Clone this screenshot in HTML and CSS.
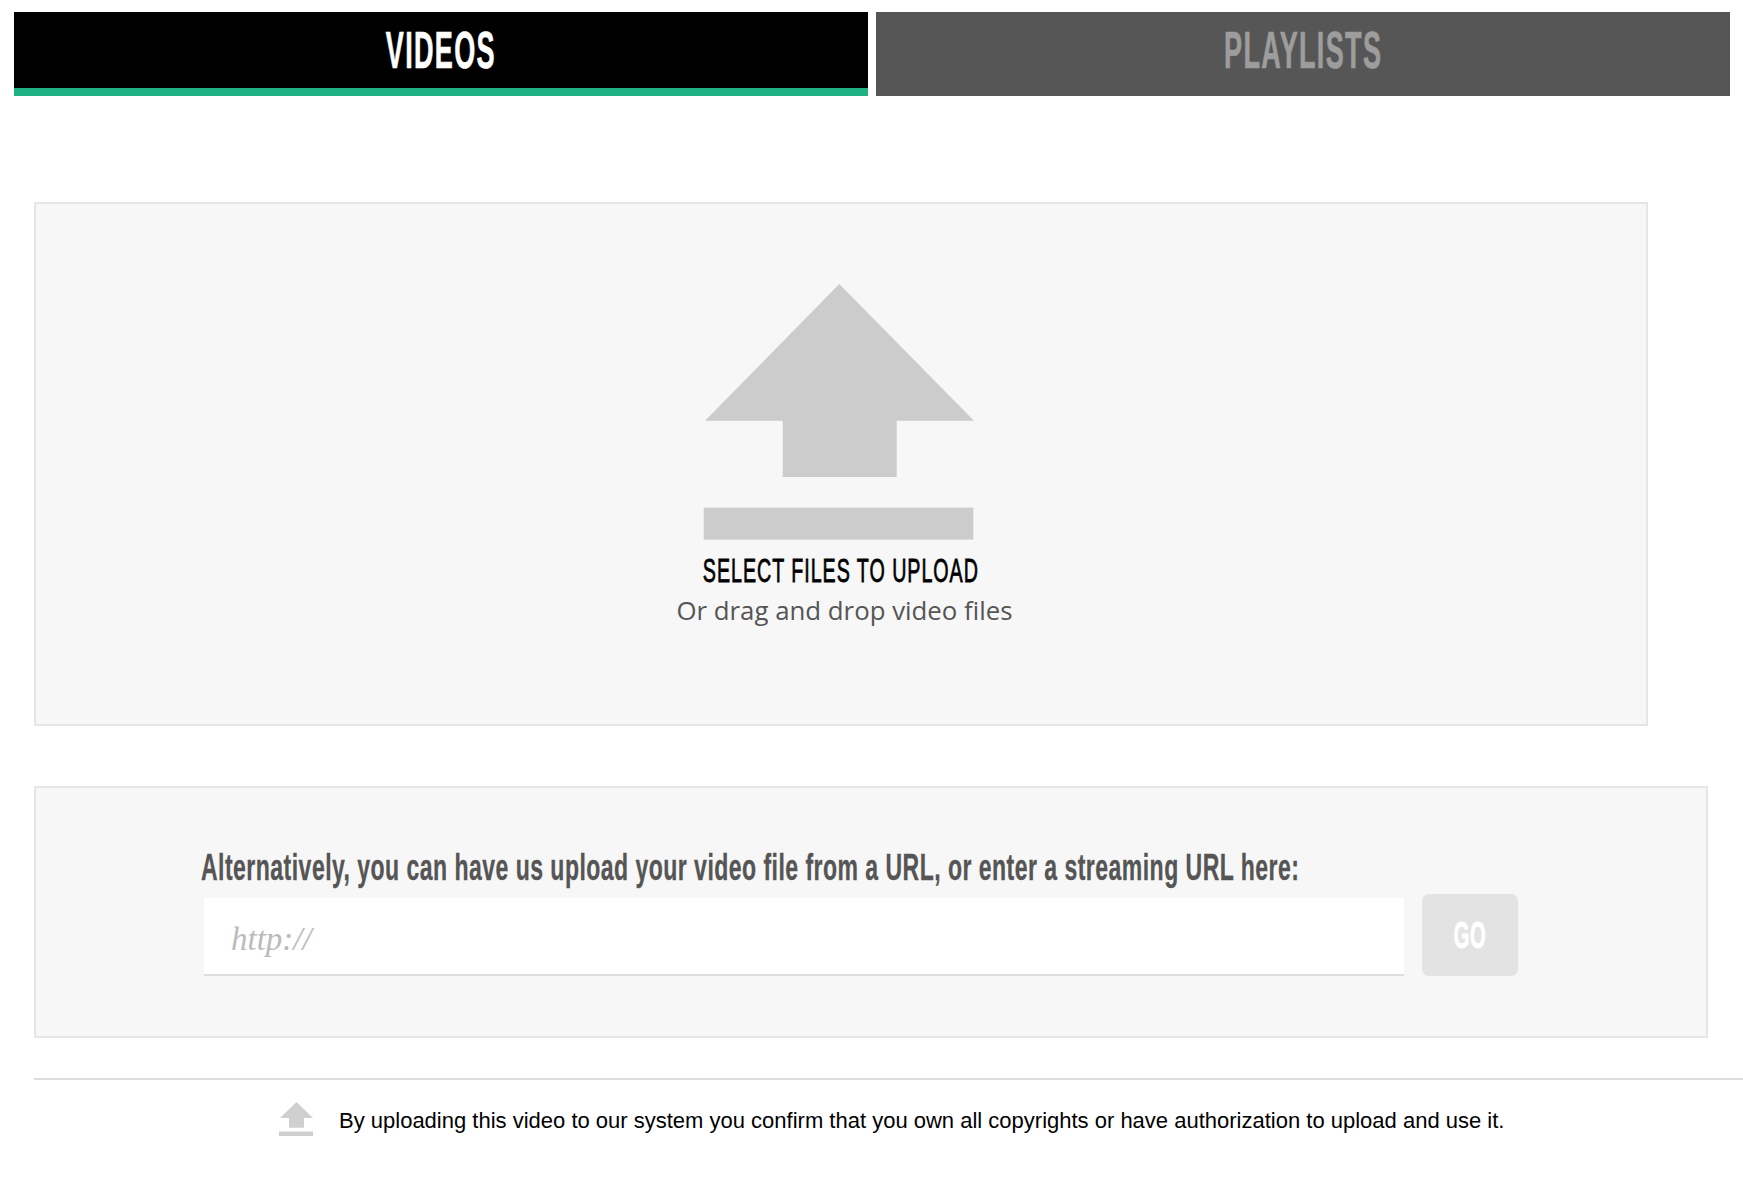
FILE: index.html
```html
<!DOCTYPE html>
<html lang="en">
<head>
<meta charset="utf-8">
<title>Upload</title>
<link rel="stylesheet" href="styles.css">
</head>
<body>
<nav class="tabs">
  <div class="tab tab-active"><span class="cond tab-label">VIDEOS</span></div>
  <div class="tab tab-idle"><span class="cond tab-label">PLAYLISTS</span></div>
</nav>
<section class="dropzone">
  <svg class="drop-icon" viewBox="0 0 272 256" aria-hidden="true"><path d="M136.3 0 271 136.7H193.7V193H79.7V136.7H2Z"/><rect x="0.7" y="223.6" width="269.6" height="32"/></svg>
  <div class="drop-title"><span class="cond">SELECT FILES TO UPLOAD</span></div>
  <div class="drop-sub">Or drag and drop video files</div>
</section>
<section class="urlbox">
  <div class="url-inner">
    <label class="url-label"><span class="cond">Alternatively, you can have us upload your video file from a URL, or enter a streaming URL here:</span></label>
    <div class="url-row">
      <input class="url-input" type="text" placeholder="http://">
      <button class="go" type="button"><span class="cond">GO</span></button>
    </div>
  </div>
</section>
<footer class="legal">
  <svg class="legal-icon" viewBox="0 0 34 34" aria-hidden="true"><path d="M17.5 0 34 16H25V25.7H10V16H1Z"/><rect y="29.5" width="34" height="4.5"/></svg>
  <span class="legal-text">By uploading this video to our system you confirm that you own all copyrights or have authorization to upload and use it.</span>
</footer>
</body>
</html>
```
FILE: styles.css
```css
* { box-sizing: border-box; }
html, body { margin: 0; padding: 0; background: #fff; }
body { height: 1193px; overflow: hidden; font-family: "Liberation Sans", Arial, sans-serif; }
.cond {
  display: inline-block;
  font-family: "Liberation Sans Narrow", "Liberation Sans", sans-serif;
  font-weight: 700;
  white-space: nowrap;
}
.tabs { display: flex; gap: 8px; padding: 12px 13px 0 14px; }
.tab { flex: 1; height: 84px; display: flex; justify-content: center; padding-top: 11px; }
.tab-active { background: #000; color: #fff; border-bottom: 8px solid #20b182; }
.tab-idle { background: #565656; color: #9d9d9d; }
.tab-label { font-size: 51px; line-height: 56px; letter-spacing: 2.5px; transform: scaleX(.53); -webkit-text-stroke: .7px currentColor; }
.dropzone {
  margin: 106px 0 0 34px;
  width: 1614px;
  height: 524px;
  background: #f7f7f7;
  border: 2px solid #e6e6e6;
  display: flex;
  flex-direction: column;
  align-items: center;
  padding-top: 80px;
}
.drop-icon { width: 272px; height: 256px; fill: #cccccc; display: block; flex: none; margin-right: 4px; }
.drop-title { margin-top: 10px; font-size: 34px; line-height: 40px; color: #000; transform: scaleX(.578); }
.drop-title .cond { font-weight: 400; letter-spacing: 1.7px; -webkit-text-stroke: .8px #000; }
.drop-sub { font-family: "Open Sans", sans-serif; font-size: 25.8px; line-height: 40px; color: #555; padding-left: 7px; }
.urlbox {
  margin: 60px 0 0 34px;
  width: 1674px;
  height: 252px;
  background: #f7f7f7;
  border: 2px solid #e6e6e6;
  padding: 58px 0 0 165px;
}
.url-inner { width: 1320px; }
.url-label { display: block; font-size: 36px; line-height: 44px; color: #555; margin-bottom: 4px; }
.url-label .cond { letter-spacing: .72px; transform: scaleX(.64); transform-origin: left center; -webkit-text-stroke: .3px #555; }
.url-row { display: flex; align-items: flex-end; gap: 18px; padding-left: 3px; }
.url-input {
  width: 1200px;
  height: 78px;
  border: 0;
  border-bottom: 2px solid #ddd;
  background: #fff;
  padding: 7px 27px 0;
  font-family: "Liberation Serif", serif;
  font-style: italic;
  font-size: 33px;
  outline: none;
}
.url-input::placeholder { color: #bbb; opacity: 1; }
.go {
  width: 96px;
  height: 82px;
  background: #e3e3e3;
  border: 0;
  border-radius: 7px;
  color: #fff;
  padding: 2px 0 0;
  font-size: 36px;
  line-height: 40px;
}
.go .cond { letter-spacing: 1px; transform: scaleX(.56); -webkit-text-stroke: 1px #fff; }
.legal {
  margin: 40px 0 0 34px;
  height: 90px;
  border-top: 2px solid #ddd;
  display: flex;
  align-items: flex-start;
  padding: 22px 0 0 245px;
  gap: 26px;
}
.legal-icon { width: 34px; height: 34px; fill: #cfcfcf; flex: none; }
.legal-text { font-size: 22px; line-height: 30px; color: #000; padding-top: 4px; }
```
